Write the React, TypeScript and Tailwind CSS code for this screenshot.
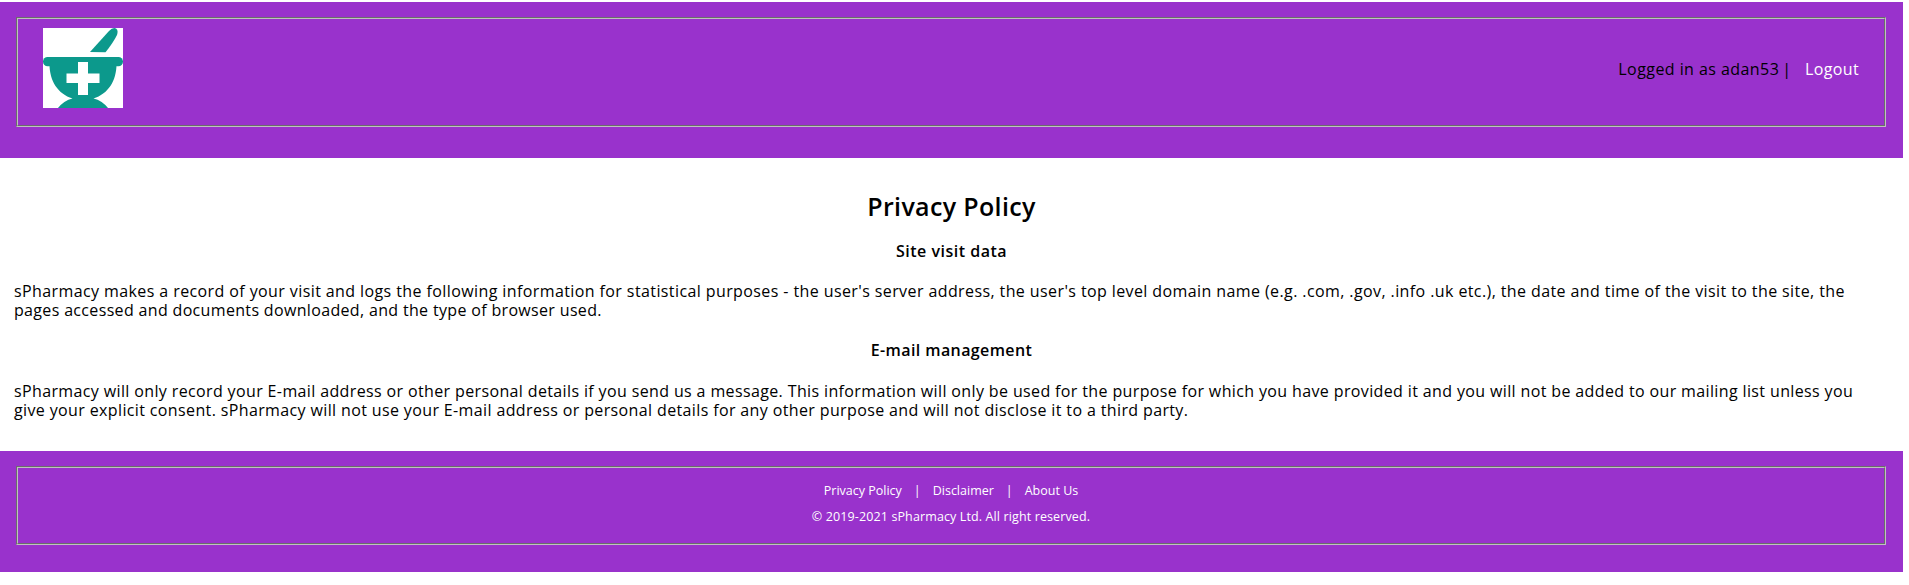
function Logo() {
  return (
    <svg viewBox="0 0 80 80" className="block h-20 w-20 bg-white" aria-hidden="true">
      <g fill="#0c998c">
        <path d="M47 24L66 3Q70 -1 73 0.5Q75.500 2 74 7Q70 15 62.500 24.300Z" />
        <rect x="0" y="29" width="80" height="9.300" rx="4.600" />
        <path d="M6.500 36H73.500C73.500 53 65 66 50.500 70.500Q59 72.500 65 80H15Q21 72.500 29.500 70.500C15 66 6.500 53 6.500 36Z" />
      </g>
      <path fill="#fff" d="M35 34H45V45.500H56.500V55H45V67H35V55H23.500V45.500H35Z" />
    </svg>
  );
}

export default function App() {
  return (
    <div className="flex h-[585px] w-[1903px] flex-col bg-white pt-0.5 font-['Open_Sans',sans-serif] text-base text-black">
      <header className="h-[156px] shrink-0 bg-[#9932cc] pt-[15px] pr-[17px] pl-4">
        <div className="flex h-[110px] justify-between border-2 border-[#c0c0c0] pt-[9px] pr-[25px] pl-[25px] [border-style:groove]">
          <Logo />
          <div className="flex h-5 pt-[31px] leading-5 whitespace-nowrap">
            <span className="tracking-[0.44px]">Logged in as adan53</span>
            <span className="mr-3.5 ml-[3px]">|</span>
            <a href="#" className="tracking-[0.35px] text-white">Logout</a>
          </div>
        </div>
      </header>

      <main className="h-[293px] shrink-0 px-3.5 pt-[33px] whitespace-nowrap">
        <h1 className="text-center text-[25px] leading-[30px] font-semibold tracking-[0.35px]">Privacy Policy</h1>
        <h2 className="mt-5 text-center leading-5 font-semibold tracking-[0.5px]">Site visit data</h2>
        <p className="mt-[21px] leading-[19px]">
          <span className="block tracking-[0.402px]">
            sPharmacy makes a record of your visit and logs the following information for statistical purposes - the user's server address, the user's top level domain name (e.g. .com, .gov, .info .uk etc.), the date and time of the visit to the site, the
          </span>
          <span className="block tracking-[0.335px]">pages accessed and documents downloaded, and the type of browser used.</span>
        </p>
        <h2 className="mt-5 text-center leading-5 font-semibold tracking-[0.4px]">E-mail management</h2>
        <p className="mt-[22px] leading-[19px]">
          <span className="block tracking-[0.369px]">
            sPharmacy will only record your E-mail address or other personal details if you send us a message. This information will only be used for the purpose for which you have provided it and you will not be added to our mailing list unless you
          </span>
          <span className="block tracking-[0.37px]">
            give your explicit consent. sPharmacy will not use your E-mail address or personal details for any other purpose and will not disclose it to a third party.
          </span>
        </p>
      </main>

      <footer className="h-[121px] shrink-0 bg-[#9932cc] pt-[15px] pr-[17px] pl-4 text-[12.5px] text-white">
        <div className="flex h-[79px] flex-col items-center border-2 border-[#c0c0c0] pt-[15px] leading-4 whitespace-nowrap [border-style:groove]">
          <nav className="flex gap-3">
            <a href="#">Privacy Policy</a>
            <span>|</span>
            <a href="#">Disclaimer</a>
            <span>|</span>
            <a href="#">About Us</a>
          </nav>
          <p className="mt-2.5 tracking-[0.12px]">© 2019-2021 sPharmacy Ltd. All right reserved.</p>
        </div>
      </footer>
    </div>
  );
}
